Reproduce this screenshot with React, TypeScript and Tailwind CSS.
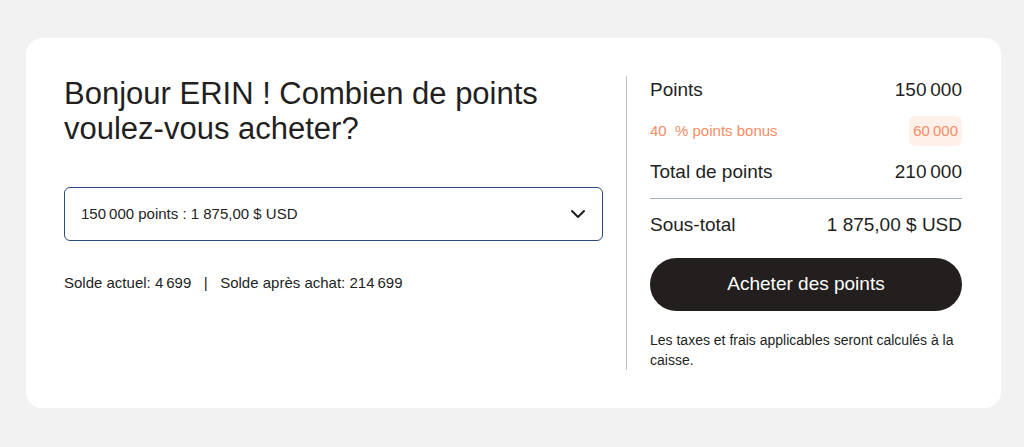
import { ChevronDown } from "lucide-react";

const App = () => {
  return (
    <div className="min-h-screen w-full bg-[#f2f2f2] pt-[38px] pl-[26px] font-['Liberation_Sans',Arial,sans-serif] text-[#231f1e]">
      <div className="flex w-[975px] h-[370px] rounded-2xl bg-white px-[38px] py-[38px]">
        {/* Left: selection */}
        <div className="w-[539px] flex flex-col">
          <h1 className="text-[31px] leading-[35px] font-normal pr-6">
            Bonjour ERIN ! Combien de points voulez-vous acheter?
          </h1>
          <button className="mt-[41px] flex h-[54px] w-full items-center justify-between rounded-md border border-[#2c4a7e] pl-4 pr-[12px] text-left text-[15px]">
            <span>150{"\u202f"}000 points : 1 875,00 $ USD</span>
            <ChevronDown className="h-6 w-6" strokeWidth={2} />
          </button>
          <p className="mt-8 text-[15px] leading-5">
            Solde actuel: 4{"\u202f"}699 &nbsp;&nbsp;|&nbsp;&nbsp; Solde après achat: 214{"\u202f"}699
          </p>
        </div>

        {/* Divider */}
        <div className="ml-[23px] mr-[23px] w-px bg-[#b9c1d6]" />

        {/* Right: summary */}
        <div className="flex w-[312px] flex-col">
          <div className="flex h-7 items-center justify-between text-[19px]">
            <span>Points</span>
            <span>150{"\u202f"}000</span>
          </div>
          <div className="mt-3 flex h-[30px] items-center justify-between text-[15px] text-[#f58d64]">
            <span>40&nbsp; % points bonus</span>
            <span className="flex h-[30px] items-center rounded-md bg-[#fff1ea] px-[4px]">60{"\u202f"}000</span>
          </div>
          <div className="mt-3 flex h-7 items-center justify-between text-[19px]">
            <span>Total de points</span>
            <span>210{"\u202f"}000</span>
          </div>
          <div className="mt-3 h-px bg-[#a9b0c8]" />
          <div className="mt-3 flex h-7 items-center justify-between text-[19px]">
            <span>Sous-total</span>
            <span>1 875,00 $ USD</span>
          </div>
          <button className="mt-[19px] h-[53px] w-full rounded-full bg-[#231f1e] text-[19px] text-white">
            Acheter des points
          </button>
          <p className="mt-[19px] text-[14px] leading-5">
            Les taxes et frais applicables seront calculés à la caisse.
          </p>
        </div>
      </div>
    </div>
  );
};

export default App;
